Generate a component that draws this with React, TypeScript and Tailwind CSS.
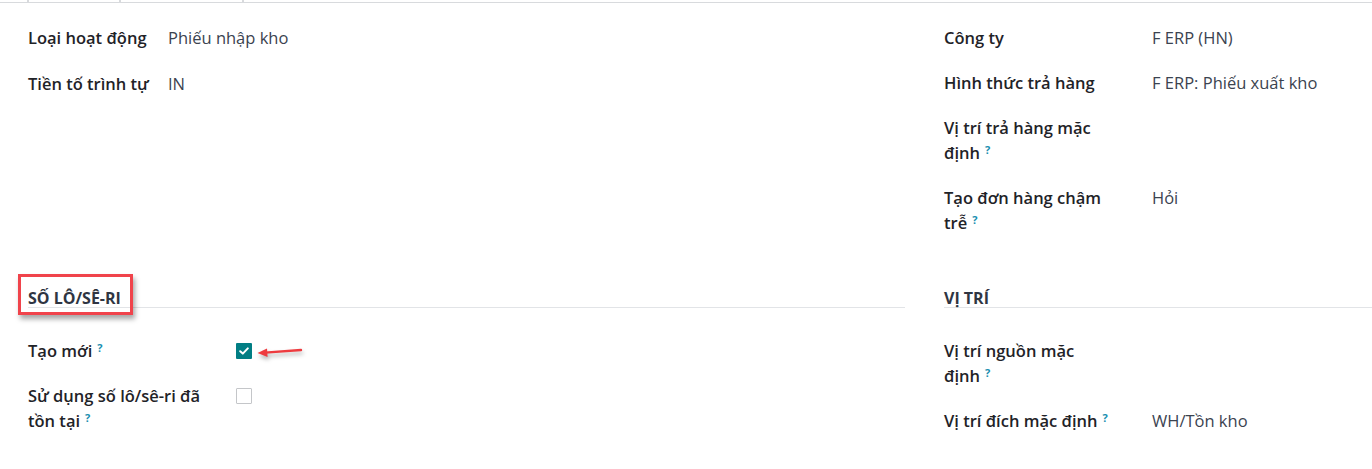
import React from "react";

const Help = () => (
  <sup className="ml-[5px] text-[11px] font-bold text-[#1a8fb0] relative -top-[5px]">?</sup>
);

type RowProps = {
  label: React.ReactNode;
  children?: React.ReactNode;
  labelWidth: string;
};

const Row = ({ label, children, labelWidth }: RowProps) => (
  <div className="flex items-start">
    <div className={`${labelWidth} shrink-0 font-semibold text-[#1f2328]`}>{label}</div>
    <div className="flex-1 text-[#3b4350]">{children}</div>
  </div>
);

const SectionHeader = ({ title, boxed }: { title: string; boxed?: boolean }) => (
  <div className="relative border-b border-[#e2e4e7] h-[23px]">
    <span className="text-[16px] font-bold leading-5 text-[#2f3542]">{title}</span>
    {boxed && (
      <div className="absolute -left-[10px] -top-[11px] w-[115px] h-[41px] border-[3px] border-[#f0434b] shadow-[2px_4px_5px_rgba(0,0,0,0.35)]" />
    )}
  </div>
);

const Checkbox = ({ checked }: { checked?: boolean }) =>
  checked ? (
    <div className="w-4 h-4 mt-[4.5px] bg-[#017e84] flex items-center justify-center rounded-[1px]">
      <svg width="10" height="8" viewBox="0 0 10 8">
        <path d="M1.2 4.2 L3.8 6.6 L8.8 1.4" fill="none" stroke="white" strokeWidth="2" strokeLinecap="round" strokeLinejoin="round" />
      </svg>
    </div>
  ) : (
    <div className="w-4 h-4 mt-[4.5px] border-[1.5px] border-[#c4c6c9] bg-white rounded-[1px]" />
  );

export default function App() {
  return (
    <div className="w-[1372px] h-[469px] bg-white overflow-hidden text-[16.5px] leading-[25px]" style={{ fontFamily: '"Open Sans", "Noto Sans", sans-serif' }}>
      {/* tab strip bottom */}
      <div className="flex h-[3px] border-b border-[#d8dadd]">
        <div className="w-[27px]" />
        <div className="w-[92px] border-l-2 border-[#d8dadd]" />
        <div className="w-[123px] border-l-2 border-[#d8dadd]" />
        <div className="flex-1 border-l-2 border-[#d8dadd]" />
      </div>

      <div className="grid grid-cols-[944px_1fr]">
        {/* left top */}
        <div className="pl-7 pr-[39px] pt-[22px] flex flex-col gap-[21px]">
          <Row label="Loại hoạt động" labelWidth="w-[140px]">Phiếu nhập kho</Row>
          <Row label="Tiền tố trình tự" labelWidth="w-[140px]">IN</Row>
        </div>

        {/* right top */}
        <div className="pt-[22px] flex flex-col gap-[20px]">
          <Row label="Công ty" labelWidth="w-[208px]">F ERP (HN)</Row>
          <Row label="Hình thức trả hàng" labelWidth="w-[208px]">F ERP: Phiếu xuất kho</Row>
          <Row label={<>Vị trí trả hàng mặc<br />định<Help /></>} labelWidth="w-[208px]" />
          <Row label={<>Tạo đơn hàng chậm<br />trễ<Help /></>} labelWidth="w-[208px]">Hỏi</Row>
        </div>

        {/* left bottom */}
        <div className="pl-7 pr-[39px] pt-[50px]">
          <SectionHeader title="SỐ LÔ/SÊ-RI" boxed />
          <div className="pt-[30px] flex flex-col gap-[20px]">
            <Row label={<>Tạo mới<Help /></>} labelWidth="w-[208px]">
              <div className="relative">
                <Checkbox checked />
                <svg className="absolute left-[19px] top-[2px]" width="50" height="16" viewBox="0 0 50 16" style={{ filter: "drop-shadow(1px 3px 2px rgba(0,0,0,0.3))" }}>
                  <path d="M10 7.6 L46 5" stroke="#ee3b3f" strokeWidth="2.4" strokeLinecap="round" />
                  <path d="M2.5 8 L12 3.4 L12.6 12 Z" fill="#ee3b3f" />
                </svg>
              </div>
            </Row>
            <Row label={<>Sử dụng số lô/sê-ri đã<br />tồn tại<Help /></>} labelWidth="w-[208px]">
              <Checkbox />
            </Row>
          </div>
        </div>

        {/* right bottom */}
        <div className="pt-[50px]">
          <SectionHeader title="VỊ TRÍ" />
          <div className="pt-[30px] flex flex-col gap-[20px]">
            <Row label={<>Vị trí nguồn mặc<br />định<Help /></>} labelWidth="w-[208px]" />
            <Row label={<>Vị trí đích mặc định<Help /></>} labelWidth="w-[208px]">WH/Tồn kho</Row>
          </div>
        </div>
      </div>
    </div>
  );
}
